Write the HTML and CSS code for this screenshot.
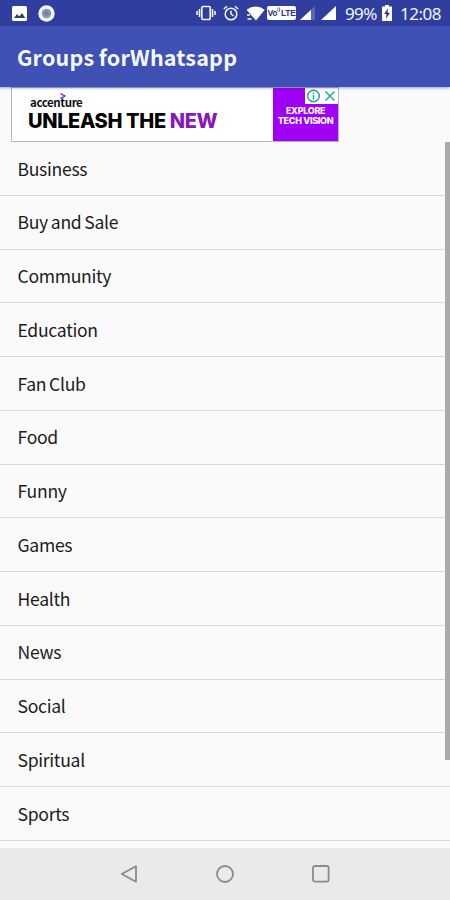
FILE: index.html
```html
<!DOCTYPE html>
<html lang="en">
<head>
<meta charset="utf-8">
<title>Groups forWhatsapp</title>
<link rel="stylesheet" href="styles.css">
</head>
<body>
<div class="screen">
  <header class="status">
    <svg class="photo" width="15" height="15" viewBox="0 0 15 15"><rect width="15" height="15" rx="1.5" fill="#fff"/><path d="M2 12 5 8l2.3 2.5L10 7l3.2 5z" fill="#343d67"/></svg>
    <svg class="disc" width="17" height="17" viewBox="0 0 17 17"><circle cx="8.5" cy="8.5" r="8.2" fill="#f5f8ff"/><circle cx="8.5" cy="8.5" r="4.8" fill="#8995b5"/><circle cx="8.5" cy="8.5" r="2.3" fill="#7180aa"/></svg>
    <svg class="vibrate" width="20" height="16" viewBox="0 0 20 16" fill="none" stroke="#f2f6ff" stroke-width="1.6"><rect x="5.8" y="1.5" width="8.4" height="13" rx="1"/><path d="M3.5 4v8M16.5 4v8M1 6v4M19 6v4"/></svg>
    <svg class="alarm" width="16" height="16" viewBox="0 0 16 16" fill="none" stroke="#f2f6ff" stroke-width="1.5"><circle cx="8" cy="9" r="5.8"/><path d="M8 5.7V9l2.6 2M.8 4 4 1.2M15.2 4 12 1.2"/></svg>
    <svg class="wifi" width="19" height="15" viewBox="0 0 19 15" fill="#fff"><path d="M.5 3.8Q9.5-3 18.8 3.8L10 14.5z"/><path d="M1 9h3M1.5 13h4" stroke="#fff" stroke-width="1.3"/></svg>
    <span class="volte">Vo<svg width="4" height="6" viewBox="0 0 4 6"><path d="M0 1.2Q1.5 2.5 0 4M1.8.2Q4 2.5 1.8 5" fill="none" stroke="#27347f" stroke-width=".8"/></svg>LTE</span>
    <svg class="sig1" width="15" height="14" viewBox="0 0 15 14"><path d="M15 0v14H0z" fill="#5865b8"/><path d="M11 3.7V14H0z" fill="#fff"/></svg>
    <svg class="sig2" width="15" height="14" viewBox="0 0 15 14"><path d="M15 0v14H0z" fill="#fff"/></svg>
    <span class="percent">99%</span>
    <svg class="battery" width="10" height="16" viewBox="0 0 10 16"><path d="M3 0h4v1.6h3V16H0V1.6h3z" fill="#fff"/><path d="M6 3.3 2.2 9h2.3L4 13.7 8 7.8H5.5z" fill="#28337f"/></svg>
    <span class="clock">12:08</span>
  </header>
  <div class="appbar"><h1>Groups forWhatsapp</h1></div>
  <main>
    <section class="ad">
      <div class="copy">
        <div class="brand">accenture<svg class="accent" width="6" height="6" viewBox="0 0 6 6"><path d="M.5.7 5 3 .5 5.3" fill="none" stroke="#9b18d0" stroke-width="1.4"/></svg></div>
        <div class="slogan">UNLEASH THE <b>NEW</b></div>
      </div>
      <div class="cta"><span class="explore">EXPLORE</span><span class="vision">TECH VISION</span>
        <svg class="choices" width="33" height="16" viewBox="0 0 33 16"><path d="M0 0h33v16H0z" fill="#fff"/><g fill="none" stroke="#14a79a" stroke-width="1.4"><circle cx="8.5" cy="8" r="5.8"/><path d="M8.5 7v4.5M8.5 4.2v1.5M20.5 3.5l9 9M29.5 3.5l-9 9"/></g></svg>
      </div>
    </section>
    <ul class="groups">
      <li><span>Business</span></li>
      <li><span>Buy and Sale</span></li>
      <li><span>Community</span></li>
      <li><span>Education</span></li>
      <li><span>Fan Club</span></li>
      <li><span>Food</span></li>
      <li><span>Funny</span></li>
      <li><span>Games</span></li>
      <li><span>Health</span></li>
      <li><span>News</span></li>
      <li><span>Social</span></li>
      <li><span>Spiritual</span></li>
      <li><span>Sports</span></li>
    </ul>
    <div class="scroll"></div>
  </main>
  <nav>
    <svg width="18" height="20" viewBox="0 0 18 20"><path d="M16 2.3v15.4L1.7 10z"/></svg>
    <svg width="20" height="20" viewBox="0 0 20 20"><circle cx="10" cy="10" r="8"/></svg>
    <svg width="18" height="20" viewBox="0 0 18 20"><rect x="1" y="2" width="15.6" height="15.6" rx="1.8"/></svg>
  </nav>
</div>
</body>
</html>
```
FILE: styles.css
```css
* { box-sizing: border-box; }
body { margin: 0; font-family: "Noto Sans CJK SC", "Noto Sans", sans-serif; }
.screen { width: 450px; height: 900px; display: flex; flex-direction: column; overflow: hidden; background: #fafafa; }
.status { height: 26px; flex: none; display: flex; align-items: center; background: #303e9f; color: #f2f6ff; white-space: nowrap; }
.status > * { flex: none; }
.photo { margin-left: 12px; }
.disc { margin-left: 11px; }
.vibrate { margin-left: 141px; }
.alarm { margin-left: 7px; }
.wifi { margin-left: 7px; }
.volte { margin-left: 2px; width: 29px; height: 14px; border-radius: 2px; background: #fff; color: #27347f; font: bold 8.5px/14px "Liberation Sans", sans-serif; text-align: center; letter-spacing: -.3px; }
.volte svg { vertical-align: 3px; }
.sig1 { margin-left: 4px; }
.sig2 { margin-left: 6px; }
.percent, .clock { font: 17px/26px "Noto Sans", sans-serif; padding-top: 1px; }
.percent { margin-left: 9px; width: 33px; letter-spacing: -.6px; }
.battery { margin-left: 4px; }
.clock { margin-left: 8px; letter-spacing: -.5px; }
.appbar { height: 61px; flex: none; display: flex; align-items: center; padding: 0 0 0 17px; background: #3f51b5; box-shadow: 0 1px 3px rgba(40, 48, 120, .45); z-index: 1; }
h1 { margin: 0; color: #f5f9ff; font-size: 21.5px; line-height: 32px; font-weight: 700; letter-spacing: .2px; word-spacing: -.5px; white-space: nowrap; }
main { flex: 1; min-height: 0; position: relative; overflow: hidden; }
.ad { width: 328px; height: 55px; margin-left: 11px; display: flex; border: 1px solid #b9b5bd; background: #fff; font-family: "Liberation Sans", sans-serif; white-space: nowrap; }
.copy { width: 262px; padding: 8px 0 0 18px; }
.brand { position: relative; width: 52px; font: bold 11.5px/13px "Noto Sans CJK SC", sans-serif; letter-spacing: -.4px; color: #111; }
.accent { position: absolute; left: 30px; top: -3px; }
.slogan { margin: 1px 0 0 -2px; font: 800 20px/22px Inter, sans-serif; letter-spacing: -.35px; color: #000; }
.slogan b { font-weight: 800; color: #8619b8; }
.cta { position: relative; width: 65px; padding-top: 18px; display: flex; flex-direction: column; align-items: center; background: #a000f5; color: #fff; font: 800 9px/10px Inter, sans-serif; letter-spacing: -.3px; }
.choices { position: absolute; right: 0; top: 0; }
.groups { margin: 0; padding: 0; list-style: none; }
.groups li { height: 53.75px; display: flex; align-items: center; padding: .5px 0 0 17.5px; border-bottom: 1px solid #d8d8d8; color: #1c1c1c; font-size: 17.6px; line-height: 26px; letter-spacing: -.31px; word-spacing: -.8px; }
.scroll { position: absolute; right: 0; top: 55px; width: 5px; height: 618px; background: #aaa; }
nav { height: 52px; flex: none; display: flex; justify-content: center; align-items: center; gap: 77px; background: #eaeaea; }
nav svg { fill: none; stroke: #8b8b8b; stroke-width: 1.8; stroke-linejoin: round; }
```
